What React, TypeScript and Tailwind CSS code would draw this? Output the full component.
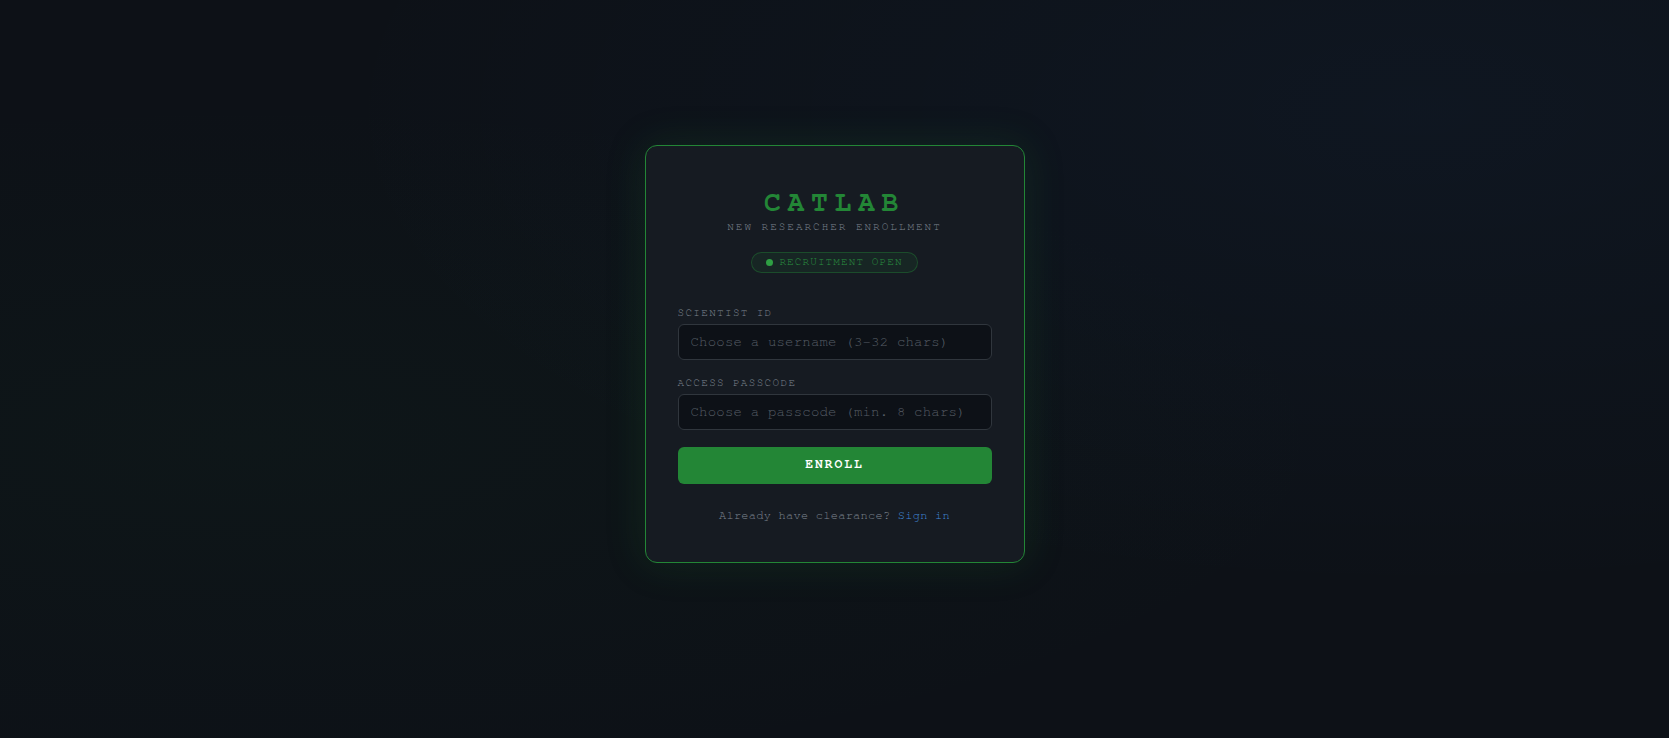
import { useState } from 'react';

const mono = "font-['Nimbus_Mono_PS','Nimbus_Mono_L','FreeMono','Courier',monospace]";

export default function App() {
  const [username, setUsername] = useState('');
  const [passcode, setPasscode] = useState('');

  return (
    <div
      className={`min-h-screen flex items-center justify-center pb-[31px] bg-[#0d1117] bg-[radial-gradient(ellipse_at_15%_60%,rgba(35,134,54,0.045),transparent_55%),radial-gradient(ellipse_at_85%_15%,rgba(56,139,253,0.045),transparent_55%)] ${mono}`}
    >
      <div className="w-[380px] rounded-xl border border-[#238636] bg-[#161b22] px-8 pt-[41px] pb-[39px] shadow-[0_0_40px_rgba(35,134,54,0.18)]">
        <div className="flex flex-col items-center mb-8">
          <h1 className="text-[28px] leading-[32px] font-bold tracking-[0.24em] text-[#238636]">CATLAB</h1>
          <p className="text-[11px] leading-4 tracking-[0.18em] text-[#7d8590]">NEW RESEARCHER ENROLLMENT</p>
          <span className="mt-[17px] inline-flex items-center h-[21px] px-[14px] gap-[6px] rounded-full border border-[#238636]/40 bg-[#238636]/10 text-[11px] tracking-[0.1em] text-[#2a9140]">
            <span className="w-[7px] h-[7px] rounded-full bg-[#2ea043]" />
            RECRUITMENT OPEN
          </span>
        </div>

        <form onSubmit={(e) => e.preventDefault()}>
          <div className="mb-[15px]">
            <label className="block text-[11px] leading-4 tracking-[0.12em] text-[#7d8590] mb-[3px]">SCIENTIST ID</label>
            <input
              value={username}
              onChange={(e) => setUsername(e.target.value)}
              placeholder="Choose a username (3-32 chars)"
              className={`w-full h-9 px-3 rounded-md border border-[#30363d] bg-[#0d1117] text-[14px] tracking-[0.2px] text-[#c9d1d9] placeholder:text-[#565d66] outline-none ${mono}`}
            />
          </div>
          <div className="mb-[17px]">
            <label className="block text-[11px] leading-4 tracking-[0.12em] text-[#7d8590] mb-[3px]">ACCESS PASSCODE</label>
            <input
              type="password"
              value={passcode}
              onChange={(e) => setPasscode(e.target.value)}
              placeholder="Choose a passcode (min. 8 chars)"
              className={`w-full h-9 px-3 rounded-md border border-[#30363d] bg-[#0d1117] text-[14px] tracking-[0.2px] text-[#c9d1d9] placeholder:text-[#565d66] outline-none ${mono}`}
            />
          </div>
          <button
            type="submit"
            className={`w-full h-[37px] rounded-md bg-[#238636] text-white text-[13px] font-bold tracking-[0.15em] ${mono}`}
          >
            ENROLL
          </button>
        </form>

        <p className="mt-[23px] text-center text-[12px] leading-4 tracking-[0.25px] text-[#7d8590]">
          Already have clearance? <a href="#" className="text-[#4189d9]">Sign in</a>
        </p>
      </div>
    </div>
  );
}
